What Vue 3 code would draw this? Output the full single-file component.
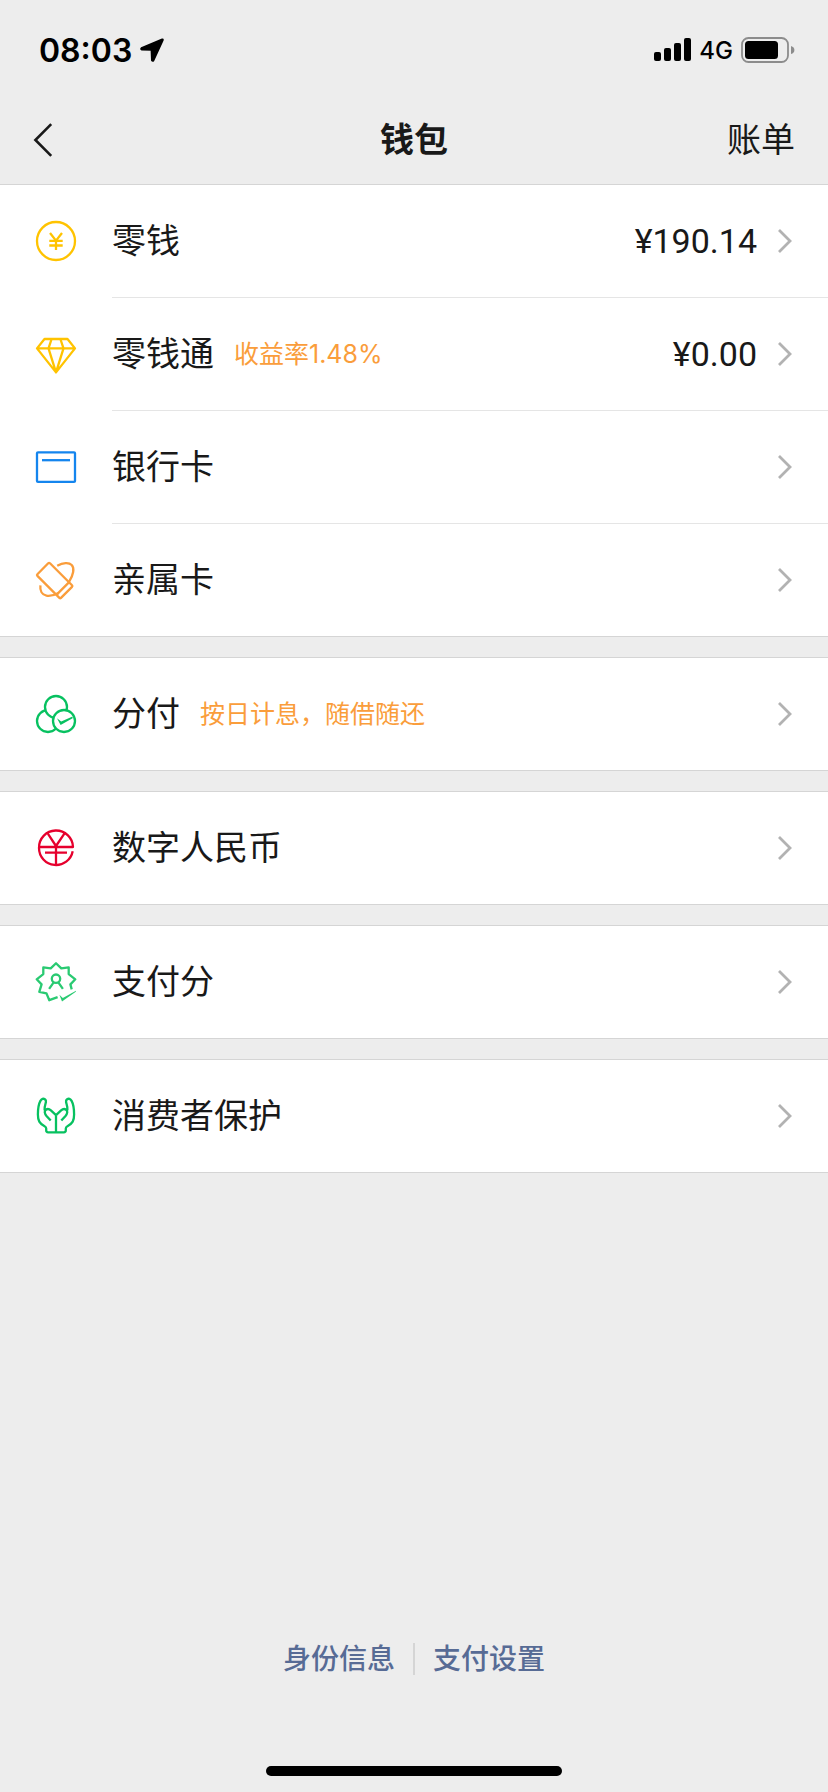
<script setup>
const groups = [
  [
    { id: 'coin', label: '零钱', amount: '¥190.14' },
    { id: 'diamond', label: '零钱通', hint: '收益率1.48%', amount: '¥0.00' },
    { id: 'card', label: '银行卡' },
    { id: 'family', label: '亲属卡' },
  ],
  [{ id: 'fenfu', label: '分付', hint: '按日计息，随借随还' }],
  [{ id: 'ecny', label: '数字人民币' }],
  [{ id: 'score', label: '支付分' }],
  [{ id: 'protect', label: '消费者保护' }],
]
</script>

<template>
  <div class="page">
    <div class="status">
      <div class="status-side">
        <span class="time">08:03</span>
        <svg class="location" viewBox="0 0 24 24" width="24" height="24" aria-hidden="true">
          <path d="M22.2 1.3 1.4 10.1q-.9.7.2 1.5l9.8.4.4 10.2q.9 1.4 1.8.2L22.9 2.1q.2-1-.7-.8Z" fill="#000" stroke="#000" stroke-width="1.6" stroke-linejoin="round" />
        </svg>
      </div>
      <div class="status-side">
        <svg viewBox="0 0 37 24" width="37" height="24" aria-hidden="true">
          <rect x="0" y="14" width="7" height="9" rx="2" />
          <rect x="10" y="10" width="7" height="13" rx="2" />
          <rect x="20" y="5" width="7" height="18" rx="2" />
          <rect x="30" y="0" width="7" height="23" rx="2" />
        </svg>
        <span class="network">4G</span>
        <svg viewBox="0 0 54 26" width="54" height="26" aria-hidden="true">
          <rect x="1" y="1" width="46" height="24" rx="6.5" fill="none" stroke="#8c8c8c" stroke-width="1.8" />
          <rect x="4" y="4" width="33" height="18" rx="3.5" />
          <path d="M50 9q3.400 1 3.400 4t-3.400 4Z" fill="#8c8c8c" />
        </svg>
      </div>
    </div>

    <header class="nav">
      <button class="back" type="button" aria-label="返回">
        <svg viewBox="0 0 20 36" width="20" height="36" aria-hidden="true">
          <path d="M18.2 2.2 2.4 18l15.8 15.8" fill="none" stroke="#191919" stroke-width="2.6" />
        </svg>
      </button>
      <h1>钱包</h1>
      <button class="bill" type="button">账单</button>
    </header>

    <main class="groups">
      <ul v-for="group in groups" :key="group[0].id" class="group">
        <li v-for="item in group" :key="item.id">
          <button class="row" type="button">
            <svg class="icon" :class="item.id" viewBox="0 0 48 48" width="48" height="48" aria-hidden="true">
              <template v-if="item.id === 'coin'">
                <circle cx="24" cy="24" r="19" />
                <path d="m18 16 6 7.6 6-7.6M24 23.6V33M17.3 23.8h13.4M17.3 28.5h13.4" />
              </template>
              <template v-else-if="item.id === 'diamond'">
                <path d="M12.5 9h23L43 18.4 24 42.4 5 18.4ZM5 18.4h38M19.6 9l-3.1 9.4L24 42.4l7.5-24L28.4 9" />
              </template>
              <template v-else-if="item.id === 'card'">
                <rect x="5" y="9.3" width="38" height="29.6" rx="1" />
                <path d="M10 17.2h28" />
              </template>
              <template v-else-if="item.id === 'family'">
                <path d="m16.2 7.3-10.8 11q-.8.8 0 1.6l22 22q.8.8 1.6 0l11-11q.8-.8 0-1.6l-22-22q-.9-.8-1.8 0ZM24.7 38.6 37.4 25.9" />
                <path d="M25.2 9.8C31 6.6 37 6.2 39.7 9c3 3 1.8 10-2.8 17.2M8.4 29.4c-.6 5.4 1.6 9.4 6 10.2 4 .7 8-.5 12.2-2.7" />
              </template>
              <template v-else-if="item.id === 'fenfu'">
                <circle cx="16" cy="31" r="11" />
                <circle cx="24" cy="17" r="11" />
                <circle cx="32" cy="31" r="11" />
                <path class="solid" d="m25 28.200 4.200 3.300L40.600 26.600v1.600l-12 6.800Z" />
              </template>
              <template v-else-if="item.id === 'ecny'">
                <path d="M7 23h34A17 17 0 0 0 7 24a17 17 0 0 0 33.7 3.2M16 9.8l8 12.2 8.2-12.2M24 22v19M13 28.6h22" />
              </template>
              <template v-else-if="item.id === 'score'">
                <path d="m25.6 39.2-8.3 3-2.800-6.800-7.200-1.600 2.300-7.400-4.900-5.100 6.600-5.200V9.400l7.400 1L24 5.200l5.300 5.200 7.400-1v6.700l6.600 5.200-4.900 5.100 1.300 5" />
                <circle cx="24" cy="20.7" r="4.2" />
                <path d="m21.7 24.4-4.6 6.5M26.3 24.4l4.6 6.5" />
                <path class="solid" d="m27.4 36.800 3.400 3.200L44 32.800l-.2 1L30 43.400Z" />
              </template>
              <template v-else>
                <path d="M24 23.2v17.1M24 40.3h-7.8q-2 0-2-2v-1.7q0-1.6-1.6-2.4C7.4 31.5 5.9 28.6 5.9 22.5c0-5.4.4-9.8 2.5-13.6 1.2-2.2 3-2.6 4.5-1.7 1.8 1.1 1.2 2.9.5 4.9q-.9 2.6-.8 6M18.7 28.6l-4.2-4.7c-2-2.400-2.400-4.900-.6-6.200 1.600-1.200 3.400-.8 5 .7L24 23.200" />
                <path d="M24 40.3h7.8q2 0 2-2v-1.7q0-1.6 1.6-2.4c5.2-2.7 6.7-5.6 6.700-11.700 0-5.400-.4-9.800-2.500-13.600-1.200-2.200-3-2.600-4.500-1.700-1.800 1.100-1.200 2.900-.5 4.900q.9 2.600.8 6M29.300 28.600l4.200-4.700c2-2.400 2.400-4.900.6-6.200-1.600-1.200-3.400-.8-5 .7L24 23.200" />
              </template>
            </svg>
            <span class="content">
              <span class="label">{{ item.label }}</span>
              <span v-if="item.hint" class="hint">{{ item.hint }}</span>
              <span v-if="item.amount" class="amount">{{ item.amount }}</span>
              <svg class="arrow" viewBox="0 0 16 26" width="16" height="26" aria-hidden="true">
                <path d="M2 2l11 11L2 24" fill="none" stroke="#b2b2b2" stroke-width="2.800" />
              </svg>
            </span>
          </button>
        </li>
      </ul>
    </main>

    <footer>
      <nav class="links" aria-label="更多">
        <a href="#identity">身份信息</a>
        <a href="#settings">支付设置</a>
      </nav>
      <div class="home-bar"></div>
    </footer>
  </div>
</template>

<style>
body {
  background: #ededed;
}
</style>

<style scoped>
.page {
  display: flex;
  flex-direction: column;
  min-height: 100vh;
  box-sizing: border-box;
  padding-bottom: 16px;
  background: #ededed;
  color: #191919;
  font-family: Inter, "Noto Sans CJK SC", sans-serif;
}

button {
  margin: 0;
  padding: 0;
  border: 0;
  background: none;
  color: inherit;
  font: inherit;
  cursor: pointer;
}

.status {
  display: flex;
  justify-content: space-between;
  align-items: center;
  height: 96px;
  box-sizing: border-box;
  padding: 4px 33px 0 39px;
  color: #000;
}

.status-side {
  display: flex;
  align-items: center;
  gap: 8px;
}

.time {
  font-size: 32px;
  font-weight: 600;
}

.network {
  font-size: 24px;
  font-weight: 500;
}

.nav {
  display: grid;
  grid-template-columns: 1fr auto 1fr;
  align-items: center;
  height: 88px;
  padding: 0 33px;
  font-size: 34px;
  line-height: 48px;
}

.back {
  display: flex;
  justify-self: start;
}

.bill {
  justify-self: end;
}

h1 {
  margin: 0;
  font-size: 34px;
  font-weight: 600;
}

.groups {
  display: flex;
  flex-direction: column;
  gap: 20px;
}

.group {
  margin: 0;
  padding: 0;
  list-style: none;
  background: #fff;
  border-top: 1px solid #d5d5d5;
  border-bottom: 1px solid #d5d5d5;
}

.row {
  display: flex;
  align-items: center;
  gap: 32px;
  width: 100%;
  padding-left: 32px;
  line-height: 48px;
  text-align: left;
}

.content {
  display: flex;
  flex: 1;
  align-items: center;
  height: 112px;
  padding-right: 35px;
}

li + li .content {
  border-top: 1px solid #e5e5e5;
}

.label {
  font-size: 34px;
}

.hint {
  margin-left: 20px;
  color: #fa9d3b;
  font-size: 25px;
}

.amount {
  margin-left: auto;
  font-family: Roboto, sans-serif;
  font-size: 34px;
}

.arrow {
  margin-left: auto;
}

.amount + .arrow {
  margin-left: 20px;
}

.icon {
  fill: none;
  stroke: currentColor;
  stroke-width: 2.3;
  stroke-linejoin: round;
}

.icon .solid {
  fill: currentColor;
  stroke: none;
}

.coin,
.diamond {
  color: #ffc300;
}

.card {
  color: #1485ee;
}

.family {
  color: #fa9d3b;
}

.fenfu,
.protect {
  color: #07c160;
}

.fenfu circle {
  fill: #fff;
}

.ecny {
  color: #e6002d;
}

.score {
  color: #2aca72;
}

footer {
  margin-top: auto;
}

.links {
  display: flex;
  justify-content: center;
}

.links a {
  padding: 0 18px;
  color: #576b95;
  font-size: 28px;
  font-weight: 500;
  line-height: 32px;
  text-decoration: none;
}

.links a + a {
  border-left: 2px solid #d5d5d5;
}

.home-bar {
  width: 296px;
  height: 10px;
  margin: 91px auto 0;
  border-radius: 5px;
  background: #000;
}
</style>
